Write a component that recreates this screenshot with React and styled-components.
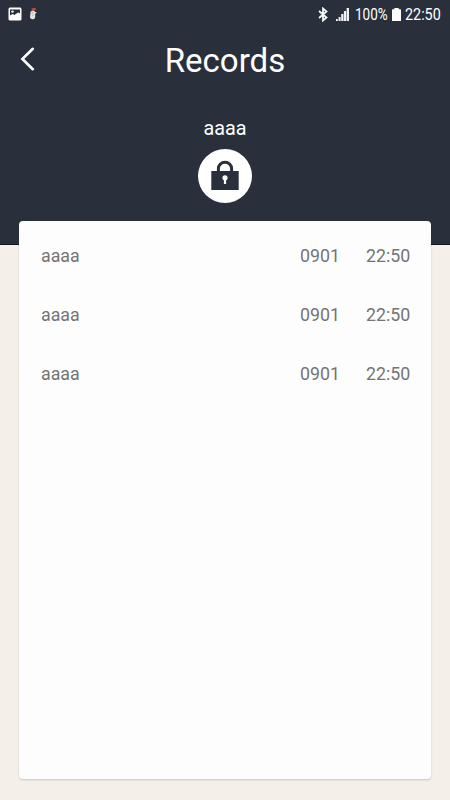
import React from "react";
import styled, { createGlobalStyle } from "styled-components";

const GlobalStyle = createGlobalStyle`
  * {
    box-sizing: border-box;
  }

  body {
    margin: 0;
    background: #f4f0e9;
    font-family: Roboto, "Liberation Sans", sans-serif;
  }
`

const Screen = styled.div`
  width: 450px;
  height: 800px;
  overflow: hidden;
  background: #f4f0e9;
`

const Header = styled.header`
  height: 245px;
  background: #29303c;
  border-bottom: 1px solid #10151e;
  color: #ffffff;
`

const StatusBar = styled.div`
  height: 28px;
  display: flex;
  align-items: center;
  justify-content: space-between;
  padding: 0 9px 0 8px;
`

const StatusGroup = styled.div`
  display: flex;
  align-items: center;
`

const StatusIcon = styled.svg`
  display: block;
  flex: none;
  margin-left: ${(props) => props.$gap || 0}px;
`

const StatusText = styled.span`
  width: ${(props) => props.$width}px;
  margin-left: ${(props) => props.$gap}px;
  padding-top: 1px;
  font-size: 16.5px;
  line-height: 28px;
  white-space: nowrap;
  transform: scaleX(${(props) => props.$squeeze});
  transform-origin: left center;
`//narrow digits

const TitleBar = styled.div`
  height: 64px;
  display: grid;
  grid-template-columns: 56px 1fr 56px;
  align-items: center;
`

const BackButton = styled.button`
  width: 56px;
  height: 64px;
  padding: 0 0 3px 20px;
  border: none;
  background: none;
  display: flex;
  align-items: center;
`

const Title = styled.h1`
  margin: 0;
  padding-top: 2px;
  font-size: 33px;
  font-weight: 400;
  line-height: 62px;
  text-align: center;
`

const LockWrap = styled.div`
  display: flex;
  flex-direction: column;
  align-items: center;
  padding-top: 25px;
`

const LockName = styled.div`
  height: 24px;
  margin-bottom: 8px;
  font-size: 19.8px;
  line-height: 24px;
`

const LockCircle = styled.div`
  width: 54px;
  height: 54px;
  border-radius: 50%;
  background: #ffffff;
`

const RecordCard = styled.main`
  width: 412px;
  height: 558px;
  margin: -24px 0 0 19px;
  padding: 5px 21px 0 22px;
  position: relative;
  border-radius: 4px;
  background: #fdfdfd;
  box-shadow: 0 1px 2px rgba(0, 0, 0, 0.18);
`

const RecordRow = styled.div`
  height: 59px;
  display: grid;
  grid-template-columns: 1fr 66px 44px;
  align-items: center;
  color: #747474;
  font-size: 17.8px;
  line-height: 24px;
  white-space: nowrap;
`

const records = [
  { id: 1, name: "aaaa", date: "0901", time: "22:50" },
  { id: 2, name: "aaaa", date: "0901", time: "22:50" },
  { id: 3, name: "aaaa", date: "0901", time: "22:50" },
]

function PhoneStatus() {
  return (
    <StatusBar>
      <StatusGroup>
        <StatusIcon width="14" height="14" viewBox="0 0 14 14">
          <rect x="0.5" y="0.5" width="13" height="13" rx="1.5" fill="#fff" />
          <path d="M2 2.5H12V6.5L10.5 5.5L8.5 6.5L6.5 8L4.5 7L2 8.5Z" fill="#29303c" />
          <circle cx="4.5" cy="4.6" r="1.2" fill="#fff" />
        </StatusIcon>
        <StatusIcon $gap={7} width="9" height="14" viewBox="0 0 9 14">
          <path d="M2.4 1.6L6.8 0.8L6.3 3.6L3 3.4Z" fill="#c4512e" />
          <path d="M1.5 5C2 3.6 5.5 3.4 6.2 5L8 5.6L6.2 6.8V10C6.2 13 1.2 13 1 10.3Z" fill="#e5e3df" />
          <path d="M2.5 5.6H4.2M3.8 7.5V8.6" stroke="#8f9297" strokeWidth="0.8" />
        </StatusIcon>
      </StatusGroup>
      <StatusGroup>
        <StatusIcon width="10" height="15" viewBox="0 0 10 15">
          <path d="M1 4L8.5 10.5L5 13.5V1.5L8.5 4.5L1 11" fill="none" stroke="#f4f5f6" strokeWidth="1.8" />
        </StatusIcon>
        <StatusIcon $gap={8} width="13" height="13" viewBox="0 0 13 13">
          <path d="M0 11H1.8V13H0ZM2.6 9H4.6V13H2.6ZM5.2 6H7.4V13H5.2ZM7.9 3H10.1V13H7.9ZM10.6 0H13V13H10.6Z" fill="#f0f1f2" />
        </StatusIcon>
        <StatusText $gap={6} $width={34} $squeeze={0.82}>100%</StatusText>
        <StatusIcon $gap={3} width="9" height="13" viewBox="0 0 9 13">
          <path d="M2.3 0H6.7V1.3H8.4Q9 1.3 9 1.9V12.4Q9 13 8.4 13H0.6Q0 13 0 12.4V1.9Q0 1.3 0.6 1.3H2.3Z" fill="#fff" />
        </StatusIcon>
        <StatusText $gap={4} $width={36} $squeeze={0.87}>22:50</StatusText>
      </StatusGroup>
    </StatusBar>
  )
}

function App() {
  const mapToRows = () => records.map((record) => (
    <RecordRow key={record.id}>
      <span>{record.name}</span>
      <span>{record.date}</span>
      <span>{record.time}</span>
    </RecordRow>
  ))

  return (
    <>
      <GlobalStyle />
      <Screen>
        <Header>
          <PhoneStatus />
          <TitleBar>
            <BackButton aria-label="Back">
              <svg width="15" height="24" viewBox="0 0 15 24">
                <path d="M12.8 1.8L2.4 12L12.8 22.2" fill="none" stroke="#fff" strokeWidth="2.6" strokeLinecap="round" />
              </svg>
            </BackButton>
            <Title>Records</Title>
          </TitleBar>
          <LockWrap>
            <LockName>aaaa</LockName>
            <LockCircle>
              <svg width="54" height="54" viewBox="0 0 54 54">
                <path d="M20.4 23V19.6A6.6 6.4 0 0 1 33.6 19.6V23" fill="none" stroke="#29303c" strokeWidth="3" />
                <rect x="13.3" y="22" width="27.4" height="19" fill="#29303c" />
                <circle cx="27" cy="28.8" r="2.6" fill="#fff" />
                <path d="M25.9 30H28.1V35H25.9Z" fill="#fff" />
              </svg>
            </LockCircle>
          </LockWrap>
        </Header>
        <RecordCard>{mapToRows()}</RecordCard>
      </Screen>
    </>
  )
}

export default App;
